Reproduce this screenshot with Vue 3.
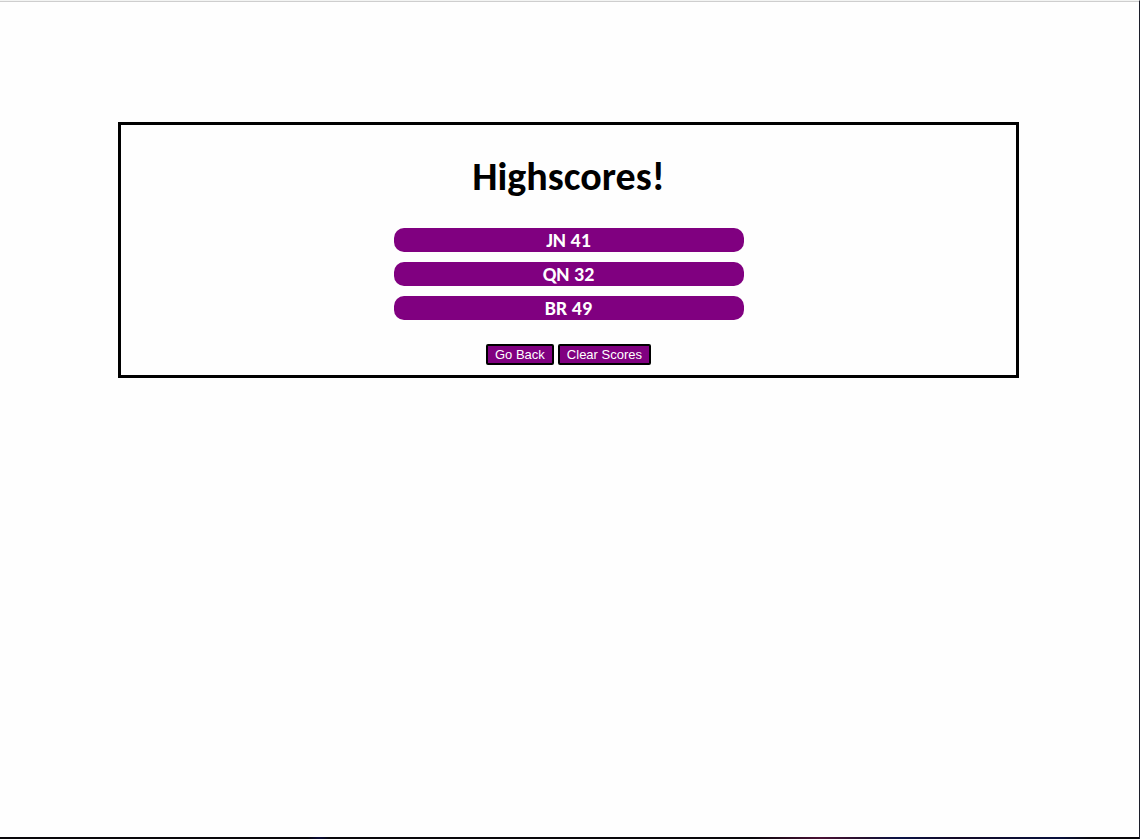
<script setup>
import { ref } from 'vue'

const scores = ref([
  { initials: 'JN', score: 41 },
  { initials: 'QN', score: 32 },
  { initials: 'BR', score: 49 }
])

function goBack() {
  window.history.back()
}

function clearScores() {
  scores.value = []
}
</script>

<template>
  <div class="page">
    <main class="panel">
      <h1>Highscores!</h1>
      <ol class="scores">
        <li v-for="entry in scores" :key="entry.initials">{{ entry.initials }} {{ entry.score }}</li>
      </ol>
      <div class="actions">
        <button type="button" @click="goBack">Go Back</button>
        <button type="button" @click="clearScores">Clear Scores</button>
      </div>
    </main>
    <div class="edge"></div>
  </div>
</template>

<style>
body {
  margin: 0;
  background: #fefefe;
}
</style>

<style scoped>
.page {
  box-sizing: border-box;
  display: flex;
  flex-direction: column;
  min-height: 100vh;
  border-top: 1px solid #f3f4f3;
  border-right: 1px solid #1b1d29;
  box-shadow: inset 0 1px #cecece;
  font-family: Calibri, Carlito, Lato, sans-serif;
}

.panel {
  margin: 121px 120px 0 118px;
  padding: 27px 10px 10px;
  border: 3px solid #000;
  text-align: center;
}

h1 {
  margin: 0 0 27px;
  font-size: 40px;
  line-height: 49px;
  font-weight: 700;
  color: #000;
}

.scores {
  display: flex;
  flex-direction: column;
  gap: 10px;
  width: 100%;
  max-width: 350px;
  margin: 0 auto 24px;
  padding: 0;
  list-style: none;
}

.scores li {
  border-radius: 10px;
  background: #800080;
  color: #fff;
  font-size: 20px;
  line-height: 24px;
  font-weight: 700;
}

.actions {
  display: flex;
  justify-content: center;
  gap: 4px;
}

button {
  padding: 1px 7px;
  border: 2px solid #000;
  border-radius: 2px;
  background: #800080;
  color: #fff;
  font-family: Arial, "Liberation Sans", sans-serif;
  font-size: 13px;
  line-height: 15px;
}

.edge {
  height: 2px;
  margin-top: auto;
  background: linear-gradient(90deg, #08070a 27%, #0a0c38 28%, #08070a 29%, #08070a 66%, #4a1034 72%, #24102e 76%, #0a1246 79%, #120a26 84%, #08103c 93%, #08070a 96%);
}
</style>
